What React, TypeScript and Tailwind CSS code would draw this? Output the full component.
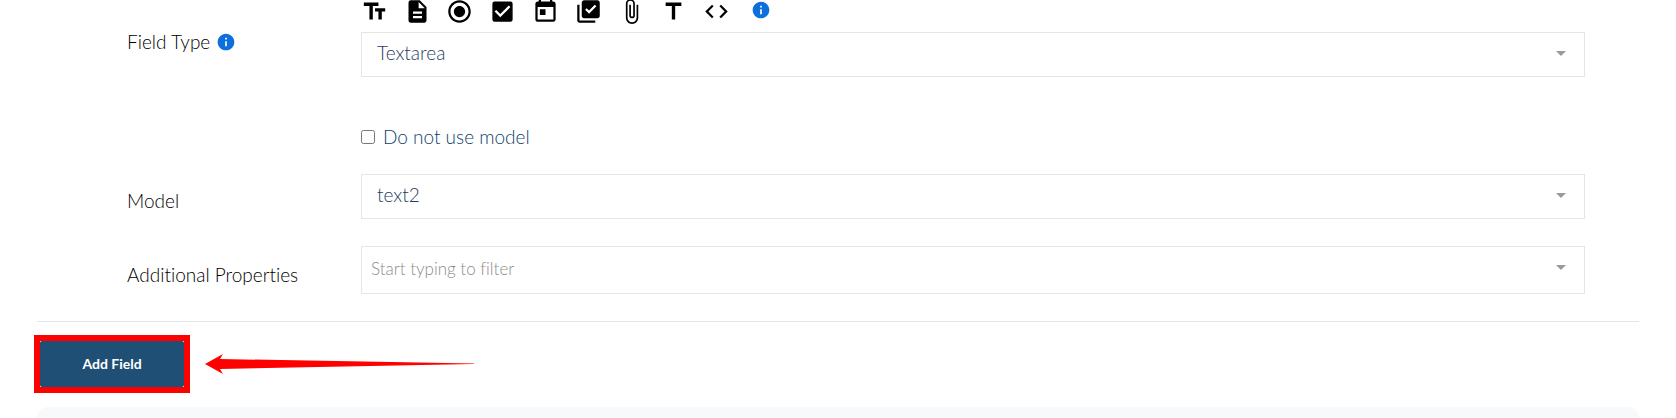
import { useState } from "react";
import type { ReactNode } from "react";
import {
  MdAttachFile,
  MdCheckBox,
  MdCode,
  MdDescription,
  MdInfo,
  MdLibraryAddCheck,
  MdRadioButtonChecked,
  MdTextFields,
  MdTitle,
  MdToday,
} from "react-icons/md";

const typeIcons = [
  { id: "text", Icon: MdTextFields },
  { id: "textarea", Icon: MdDescription },
  { id: "radio", Icon: MdRadioButtonChecked },
  { id: "checkbox", Icon: MdCheckBox },
  { id: "date", Icon: MdToday },
  { id: "multi", Icon: MdLibraryAddCheck },
  { id: "file", Icon: MdAttachFile },
  { id: "title", Icon: MdTitle },
  { id: "html", Icon: MdCode },
];

function Caret() {
  return (
    <svg viewBox="0 0 10 5" className="pointer-events-none absolute right-[19px] top-[19px] h-[5px] w-[10px] fill-[#999999]">
      <path d="M0 0h10L5 5z" />
    </svg>
  );
}

function SelectBox({ id, value, onChange, options }: { id: string; value: string; onChange: (v: string) => void; options: string[] }) {
  return (
    <div className="relative">
      <select
        id={id}
        value={value}
        onChange={(e) => onChange(e.target.value)}
        className="block h-[45px] w-full appearance-none border border-[#e5e5e5] bg-white pb-0.5 pl-[15px] pr-10 text-[19px] font-light text-[#1f3b60]"
      >
        {options.map((o) => (
          <option key={o}>{o}</option>
        ))}
      </select>
      <Caret />
    </div>
  );
}

function Label({ htmlFor, children }: { htmlFor: string; children: ReactNode }) {
  return (
    <label htmlFor={htmlFor} className="flex items-center gap-1.5 text-[19px] font-light leading-6 text-black">
      {children}
    </label>
  );
}

export default function App() {
  const [type, setType] = useState("Textarea");
  const [model, setModel] = useState("text2");
  const [noModel, setNoModel] = useState(false);
  const [filter, setFilter] = useState("");

  return (
    <main className="flex min-h-screen flex-col overflow-hidden bg-white px-[37px] font-['Lato',sans-serif] [font-variant-ligatures:none]">
      <form onSubmit={(e) => e.preventDefault()}>
        <div className="border-b border-[#e5e5e5] pb-[27px] pl-[90px] pr-[54px]">
          <div className="grid grid-cols-[234px_1fr]">
            <div className="pt-[30px]">
              <Label htmlFor="field-type">
                Field Type <MdInfo size={20} className="text-[#0d6fdc]" />
              </Label>
            </div>
            <div>
              <div className="-ml-2 -mt-0.5 mb-[7px] flex items-start">
                <div className="grid w-[385px] grid-cols-9 justify-items-center">
                  {typeIcons.map(({ id, Icon }) => (
                    <Icon key={id} size={27} className="text-black" />
                  ))}
                </div>
                <MdInfo size={20} className="ml-[13px] mt-0.5 text-[#0d6fdc]" />
              </div>
              <SelectBox id="field-type" value={type} onChange={setType} options={["Textarea", "Text", "Checkbox", "Date"]} />
            </div>
          </div>

          <div className="mt-12 grid grid-cols-[234px_1fr]">
            <label className="col-start-2 flex items-center gap-2 text-[19px] font-light leading-6 text-[#0f3f6c]">
              <input type="checkbox" checked={noModel} onChange={(e) => setNoModel(e.target.checked)} className="size-[14px]" />
              Do not use model
            </label>
          </div>

          <div className="mt-[25px] grid grid-cols-[234px_1fr]">
            <div className="pt-[15px]">
              <Label htmlFor="model">Model</Label>
            </div>
            <SelectBox id="model" value={model} onChange={setModel} options={["text2", "text1"]} />
          </div>

          <div className="mt-[27px] grid grid-cols-[234px_1fr]">
            <div className="pt-[17px]">
              <Label htmlFor="properties">Additional Properties</Label>
            </div>
            <div className="relative">
              <input
                id="properties"
                type="text"
                value={filter}
                onChange={(e) => setFilter(e.target.value)}
                placeholder="Start typing to filter"
                className="block h-12 w-full border border-[#e5e5e5] pb-1 pl-[9px] pr-10 text-[17px] font-light text-[#1f3b60] placeholder:text-[#8c8c8c]"
              />
              <Caret />
            </div>
          </div>
        </div>

        <div className="-ml-[3px] mt-[13px] flex items-center gap-[15px]">
          <div className="border-6 border-[#ff0000]">
            <button type="submit" className="block h-[46px] w-36 rounded-xs bg-[#204f76] pb-0.5 text-[14px] font-bold text-white">
              Add Field
            </button>
          </div>
          <svg viewBox="0 0 270 20" className="h-5 w-[270px] fill-[#ff0000]">
            <path d="M0 10L18 0L15 5L269 9.500V10L15 15L18 20Z" />
          </svg>
        </div>
      </form>

      <div className="mt-[14px] flex-1 rounded-t-2xl bg-[#f7f9fb]" />
    </main>
  );
}
